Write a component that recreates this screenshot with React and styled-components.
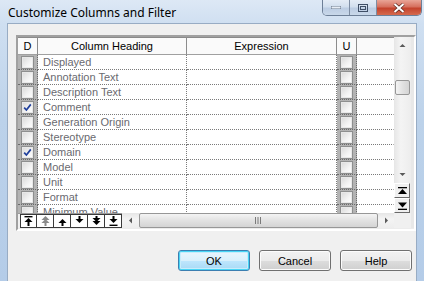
import styled, { createGlobalStyle } from "styled-components";

const GlobalStyle = createGlobalStyle`
  html, body {
    margin: 0;
    padding: 0;
    width: 424px;
    height: 281px;
    overflow: hidden;
  }
`;

const rows = [
  { name: "Displayed" },
  { name: "Annotation Text" },
  { name: "Description Text" },
  { name: "Comment", d: true },
  { name: "Generation Origin" },
  { name: "Stereotype" },
  { name: "Domain", d: true },
  { name: "Model" },
  { name: "Unit" },
  { name: "Format" },
  { name: "Minimum Value" },
];

const Window = styled.div`
  width: 424px;
  height: 281px;
  display: flex;
  flex-direction: column;
  background: linear-gradient(to bottom, #dde8f5 0, #cfdff1 24px, #bcd2ea 120px, #b4cce8 100%);
  font-family: "Liberation Sans", Arial, sans-serif;
  overflow: hidden;
`;

const TitleBar = styled.div`
  height: 23px;
  display: flex;
  align-items: flex-start;
  flex-shrink: 0;
`;

const Title = styled.div`
  flex: 1;
  padding: 4px 0 0 8px;
  font-family: "Noto Sans", "Open Sans", sans-serif;
  font-size: 12px;
  color: #000;
`;

const Controls = styled.div`
  display: flex;
  margin-right: 2px;
  border: 1px solid #6d7f97;
  border-top: none;
  border-radius: 0 0 5px 5px;
  overflow: hidden;
`;

const CtrlBtn = styled.div`
  width: ${(p) => p.w}px;
  height: 15px;
  display: flex;
  align-items: center;
  justify-content: center;
  border-left: ${(p) => (p.first ? "none" : "1px solid #7d8da3")};
  background: ${(p) =>
    p.close
      ? "linear-gradient(to bottom, #e9a597 0, #d6705e 45%, #c4432d 55%, #d56a4e 100%)"
      : "linear-gradient(to bottom, #e4ecf6 0, #d2dfee 45%, #bccde3 55%, #c9d8ea 100%)"};
`;

const Client = styled.div`
  flex: 1;
  margin: 0 7px;
  background: #f0f0f0;
  border: 1px solid #98acc4;
  border-bottom: none;
  display: flex;
  flex-direction: column;
  padding: 11px 0 0 8px;
`;

const GridBox = styled.div`
  width: 396px;
  height: 192px;
  border: 2px solid;
  border-color: #a0a0a0 #ffffff #ffffff #a0a0a0;
  display: grid;
  grid-template-columns: 376px 17px 3px;
  grid-template-rows: 176px 15px 1px;
  background: #ececec;
`;

const Table = styled.div`
  background: #fff;
  display: grid;
  grid-template-columns: 20px 149px 150px 20px 37px;
  grid-auto-rows: 15px;
  grid-template-rows: 18px;
  overflow: hidden;
`;

const HeadCell = styled.div`
  background: #fafafa;
  border-top: 1px solid #8a8a8a;
  border-bottom: 1px solid #a0a0a0;
  border-right: ${(p) => (p.last ? "none" : "1px solid #8c8c8c")};
  font-size: 11px;
  color: #000;
  display: flex;
  align-items: center;
  justify-content: center;
  box-sizing: border-box;
`;

const TextCell = styled.div`
  border-bottom: 1px dotted #7a7a7a;
  border-right: 1px dotted;
  border-right-color: ${(p) => (p.last ? "transparent" : "#7a7a7a")};
  font-size: 11px;
  color: #6a6a70;
  padding-left: 5px;
  line-height: 14px;
  white-space: nowrap;
  overflow: hidden;
  box-sizing: border-box;
`;

const CheckCell = styled.div`
  background: #b3b3b3;
  border-bottom: 1px dotted #6a6a6a;
  border-right: 1px dotted #6a6a6a;
  display: flex;
  align-items: center;
  justify-content: center;
  box-sizing: border-box;
`;

const Box = styled.div`
  width: 11px;
  height: 11px;
  border: 1px solid #8e8f8f;
  background: linear-gradient(135deg, #d8d8d8 0, #f4f4f4 60%, #ffffff 100%);
  box-shadow: inset 0 0 0 1px #e8e8e8;
  display: flex;
  align-items: center;
  justify-content: center;
`;

const VScroll = styled.div`
  display: flex;
  flex-direction: column;
  background: linear-gradient(to right, #e6e6e6, #f4f4f4 40%, #ededed);
`;

const ArrowBtn = styled.div`
  width: ${(p) => p.w || 17}px;
  height: ${(p) => p.h || 17}px;
  display: flex;
  align-items: center;
  justify-content: center;
  flex-shrink: 0;
`;

const Track = styled.div`
  flex: 1;
  display: flex;
  flex-direction: ${(p) => (p.horizontal ? "row" : "column")};
  padding: ${(p) => (p.horizontal ? "0" : "26px 0 0 1px")};
`;

const Thumb = styled.div`
  box-sizing: border-box;
  border: 1px solid #979797;
  border-radius: 2px;
  background: ${(p) =>
    p.horizontal
      ? "linear-gradient(to bottom, #f4f4f4, #e2e2e2 50%, #d4d4d4)"
      : "linear-gradient(to right, #f4f4f4, #e2e2e2 50%, #d4d4d4)"};
  width: ${(p) => (p.horizontal ? "239px" : "15px")};
  height: 15px;
  display: flex;
  align-items: center;
  justify-content: center;
`;

const JumpBtn = styled.div`
  width: 16px;
  height: 15px;
  box-sizing: border-box;
  border: 1px solid;
  border-color: #ffffff #696969 #696969 #ffffff;
  background: #f0f0f0;
  display: flex;
  align-items: center;
  justify-content: center;
`;

const Filler = styled.div`
  background: #e8e8e8;
`;

const BottomBar = styled.div`
  display: flex;
  background: #f0f0f0;
`;

const Tools = styled.div`
  display: flex;
  padding-left: 2px;
  border-top: 1px solid #9a9a9a;
`;

const ToolBtn = styled.div`
  width: 17px;
  height: 14px;
  box-sizing: border-box;
  border: 1px solid #3a3a3a;
  border-left: ${(p) => (p.first ? "1px solid #3a3a3a" : "none")};
  background: #fff;
  display: flex;
  align-items: center;
  justify-content: center;
`;

const HScroll = styled.div`
  flex: 1;
  display: flex;
  background: linear-gradient(to bottom, #e6e6e6, #f4f4f4 40%, #ededed);
`;

const Corner = styled.div`
  background: #f0f0f0;
`;

const ButtonRow = styled.div`
  display: flex;
  justify-content: flex-end;
  gap: 9px;
  margin-top: 19px;
  padding-right: 4px;
`;

const Button = styled.div`
  width: 72px;
  height: 21px;
  box-sizing: border-box;
  border: 1px solid ${(p) => (p.primary ? "#3c7fb1" : "#707070")};
  border-radius: 3px;
  background: ${(p) =>
    p.primary
      ? "linear-gradient(to bottom, #eaf6fd 0, #d9f0fc 50%, #bee6fd 51%, #a7d9f5 100%)"
      : "linear-gradient(to bottom, #f2f2f2 0, #ebebeb 50%, #dddddd 51%, #cfcfcf 100%)"};
  box-shadow: ${(p) =>
    p.primary ? "inset 0 0 0 1px #48d5f5, inset 0 0 0 2px #c8ecfb" : "inset 0 0 0 1px #fcfcfc"};
  font-size: 11px;
  color: #000;
  display: flex;
  align-items: center;
  justify-content: center;
`;

const Tri = ({ dir, color = "#5a5a5a" }) => {
  const pts = {
    up: "0.5,4 3.5,1 6.5,4",
    down: "0.5,1 3.5,4 6.5,1",
    left: "4,0.5 1,3.5 4,6.5",
    right: "1,0.5 4,3.5 1,6.5",
  }[dir];
  const vertical = dir === "up" || dir === "down";
  return (
    <svg width={vertical ? 7 : 5} height={vertical ? 5 : 7}>
      <polygon points={pts} fill={color} />
    </svg>
  );
};

const Check = () => (
  <svg width="9" height="9" viewBox="0 0 9 9">
    <path d="M1.2 4.6 L3.4 7 L7.8 1.4" stroke="#1f3f9c" strokeWidth="1.7" fill="none" />
  </svg>
);

const Checkbox = ({ checked }) => <Box>{checked && <Check />}</Box>;

const ToolIcon = ({ kind }) => {
  const c = kind === "dup" ? "#8a8a8a" : "#000";
  const up = (y) => `M4.5 ${y} L8.5 ${y + 4} L0.5 ${y + 4} Z`;
  const down = (y) => `M4.5 ${y + 4} L8.5 ${y} L0.5 ${y} Z`;
  const shapes = {
    top: (
      <>
        <rect x="0.5" y="0" width="8" height="1.4" fill={c} />
        <path d={up(2)} fill={c} />
        <rect x="3.5" y="6" width="2" height="4" fill={c} />
      </>
    ),
    dup: (
      <>
        <path d={up(0)} fill={c} />
        <path d={up(3)} fill={c} />
        <rect x="3.5" y="7" width="2" height="3" fill={c} />
      </>
    ),
    up: (
      <>
        <path d={up(3)} fill={c} />
        <rect x="3.5" y="7" width="2" height="3" fill={c} />
      </>
    ),
    down: (
      <>
        <rect x="3.5" y="0" width="2" height="3" fill={c} />
        <path d={down(3)} fill={c} />
      </>
    ),
    ddown: (
      <>
        <rect x="3.5" y="0" width="2" height="3" fill={c} />
        <path d={down(2)} fill={c} />
        <path d={down(5)} fill={c} />
      </>
    ),
    bottom: (
      <>
        <rect x="3.5" y="0" width="2" height="3" fill={c} />
        <path d={down(3)} fill={c} />
        <rect x="0.5" y="8.6" width="8" height="1.4" fill={c} />
      </>
    ),
  };
  return (
    <svg width="9" height="10" viewBox="0 0 9 10">
      {shapes[kind]}
    </svg>
  );
};

const JumpIcon = ({ top }) => (
  <svg width="9" height="8" viewBox="0 0 9 8">
    {top ? (
      <>
        <rect x="0" y="0" width="9" height="1.3" fill="#000" />
        <path d="M4.5 2 L9 7 L0 7 Z" fill="#000" />
      </>
    ) : (
      <>
        <path d="M4.5 5.5 L9 0.5 L0 0.5 Z" fill="#000" />
        <rect x="0" y="6.7" width="9" height="1.3" fill="#000" />
      </>
    )}
  </svg>
);

const Grip = () => (
  <svg width="7" height="7" viewBox="0 0 7 7">
    {[0, 2.5, 5].map((x) => (
      <rect key={x} x={x} y="0" width="1" height="7" fill="#7a7a7a" />
    ))}
  </svg>
);

export default function App() {
  return (
    <>
      <GlobalStyle />
      <Window>
        <TitleBar>
          <Title>Customize Columns and Filter</Title>
          <Controls>
            <CtrlBtn w={26} first>
              <svg width="10" height="3">
                <rect x="0" y="0" width="10" height="3" fill="#e8eef6" stroke="#4d5d73" strokeWidth="0.8" />
              </svg>
            </CtrlBtn>
            <CtrlBtn w={26}>
              <svg width="10" height="8">
                <rect x="0.5" y="0.5" width="9" height="7" fill="none" stroke="#3f4f66" strokeWidth="1" />
                <rect x="2.5" y="2.5" width="5" height="3" fill="none" stroke="#3f4f66" strokeWidth="1" />
              </svg>
            </CtrlBtn>
            <CtrlBtn w={44} close>
              <svg width="12" height="10" viewBox="0 0 12 10">
                <path d="M1.5 1 L10.5 9 M10.5 1 L1.5 9" stroke="#5b2a22" strokeWidth="3.4" />
                <path d="M1.5 1 L10.5 9 M10.5 1 L1.5 9" stroke="#ffffff" strokeWidth="2" />
              </svg>
            </CtrlBtn>
          </Controls>
        </TitleBar>
        <Client>
          <GridBox>
            <Table>
              <HeadCell>D</HeadCell>
              <HeadCell>Column Heading</HeadCell>
              <HeadCell>Expression</HeadCell>
              <HeadCell>U</HeadCell>
              <HeadCell last />
              {rows.map((r) => [
                <CheckCell key={r.name + "d"}>
                  <Checkbox checked={r.d} />
                </CheckCell>,
                <TextCell key={r.name}>{r.name}</TextCell>,
                <TextCell key={r.name + "e"} />,
                <CheckCell key={r.name + "u"}>
                  <Checkbox />
                </CheckCell>,
                <TextCell key={r.name + "b"} last />,
              ])}
            </Table>
            <VScroll>
              <ArrowBtn>
                <Tri dir="up" />
              </ArrowBtn>
              <Track>
                <Thumb />
              </Track>
              <ArrowBtn>
                <Tri dir="down" />
              </ArrowBtn>
              <JumpBtn>
                <JumpIcon top />
              </JumpBtn>
              <JumpBtn>
                <JumpIcon />
              </JumpBtn>
            </VScroll>
            <Filler />
            <BottomBar>
              <Tools>
                {["top", "dup", "up", "down", "ddown", "bottom"].map((k, i) => (
                  <ToolBtn key={k} first={i === 0}>
                    <ToolIcon kind={k} />
                  </ToolBtn>
                ))}
              </Tools>
              <HScroll>
                <ArrowBtn w={17} h={15}>
                  <Tri dir="left" />
                </ArrowBtn>
                <Track horizontal>
                  <Thumb horizontal>
                    <Grip />
                  </Thumb>
                </Track>
                <ArrowBtn w={17} h={15}>
                  <Tri dir="right" />
                </ArrowBtn>
              </HScroll>
            </BottomBar>
            <Corner />
            <Filler />
          </GridBox>
          <ButtonRow>
            <Button primary>OK</Button>
            <Button>Cancel</Button>
            <Button>Help</Button>
          </ButtonRow>
        </Client>
      </Window>
    </>
  );
}
